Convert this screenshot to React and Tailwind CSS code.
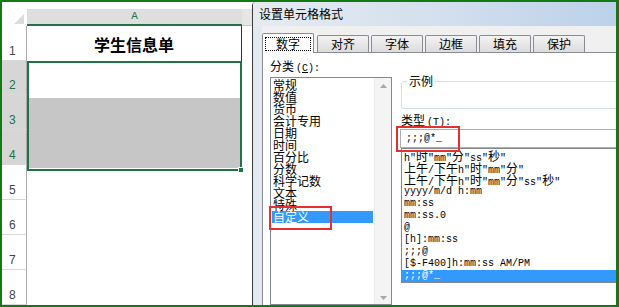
import React from "react"

const CATEGORIES = ["常规", "数值", "货币", "会计专用", "日期", "时间", "百分比", "分数", "科学记数", "文本", "特殊", "自定义"]

const FORMATS = [
  'h"时"mm"分"ss"秒"',
  '上午/下午h"时"mm"分"',
  '上午/下午h"时"mm"分"ss"秒"',
  "yyyy/m/d h:mm",
  "mm:ss",
  "mm:ss.0",
  "@",
  "[h]:mm:ss",
  ";;;@",
  "[$-F400]h:mm:ss AM/PM",
  ";;;@*_",
]

const TABS = ["数字", "对齐", "字体", "边框", "填充", "保护"]

// CJK runs at 12px, ASCII at 10px mono so each half-width char is 6px like SimSun
function Mixed({ text }) {
  const parts = text.match(/[\u3400-\u9fff]+|[^\u3400-\u9fff]+/g) || []
  return parts.map((p, i) =>
    /[\u3400-\u9fff]/.test(p) ? (
      <span key={i} className="text-[12px] leading-[12px] font-['Noto_Sans_CJK_SC',sans-serif]">{p}</span>
    ) : (
      <span key={i} className="text-[10px] leading-[12px] font-['Liberation_Mono',monospace] whitespace-pre">{p}</span>
    )
  )
}

function RowHead({ n, selected }) {
  return (
    <div
      className={`h-[36px] flex items-end pl-[7px] pb-[3px] border-b border-r border-b-[#d9d9d9] border-r-[#ababab] text-[12px] leading-[12px] font-['Liberation_Sans',sans-serif] ${
        selected ? "bg-[#d6d6d6] text-[#217346]" : "bg-white text-[#444]"
      }`}
    >
      {n}
    </div>
  )
}

function Sheet() {
  return (
    <div className="w-[250px] flex shrink-0">
      {/* row headers */}
      <div className="w-[25px] shrink-0 flex flex-col">
        <div className="h-[24px] bg-white pl-[12px] pt-[12px]">
          <svg width="10" height="10" viewBox="0 0 10 10">
            <polygon points="10,0 10,10 0,10" fill="#dcdcdc" />
          </svg>
        </div>
        <RowHead n={1} />
        <RowHead n={2} selected />
        <RowHead n={3} selected />
        <RowHead n={4} selected />
        <RowHead n={5} />
        <RowHead n={6} />
        <RowHead n={7} />
        <RowHead n={8} />
      </div>

      {/* column A */}
      <div className="w-[215px] shrink-0 flex flex-col">
        <div className="h-[24px] pt-[7px]">
          <div className="h-[17px] bg-[#dedede] border-b-2 border-[#217346] text-[#217346] text-[11px] leading-[15px] text-center font-['Liberation_Mono',monospace]">
            A
          </div>
        </div>
        <div className="h-[35px] border-r border-[#333] flex items-center justify-center">
          <span className="text-[16px] font-bold leading-none font-['Noto_Sans_CJK_SC',sans-serif]">学生信息单</span>
        </div>
        <div className="h-[110px] border-2 border-[#217346] relative flex flex-col">
          <div className="h-[35px] bg-white" />
          <div className="h-[70px] bg-[#c6c6c6]" />
          <div className="absolute -right-[4px] -bottom-[4px] w-[6px] h-[6px] bg-[#217346] border border-white" />
        </div>
      </div>

      {/* column B sliver */}
      <div className="flex-1 flex flex-col">
        <div className="h-[24px] pt-[7px]">
          <div className="h-[17px] bg-[#e6e6e6] border-b border-[#c8c8c8]" />
        </div>
      </div>
    </div>
  )
}

function Tab({ label, selected }) {
  if (selected) {
    return (
      <div className="relative z-10 -mb-px h-[20px] w-[52px] shrink-0 bg-white border border-b-0 border-[#898c95] rounded-t-[2px] flex items-center justify-center text-[12px] leading-[12px]">
        <div className="absolute left-[2px] right-[2px] top-[3px] h-[14px] border border-dotted border-black" />
        {label}
      </div>
    )
  }
  return (
    <div className="ml-[2px] first:ml-0 h-[17px] w-[52px] shrink-0 bg-linear-to-b from-[#f3f3f3] to-[#dcdcdc] border border-b-0 border-[#898c95] rounded-t-[2px] flex items-center justify-center text-[12px] leading-[12px]">
      {label}
    </div>
  )
}

function Dialog() {
  return (
    <div className="flex-1 min-w-0 flex flex-col border-l border-[#3a3a3a] rounded-tl-[4px] overflow-hidden">
      <div className="h-[24px] shrink-0 bg-linear-to-r from-[#e6ebf1] via-[#d4e0ee] to-[#bcd1ea] flex items-center pl-[6px] text-[12px] text-black">
        设置单元格格式
      </div>
      <div className="flex-1 min-h-0 flex">
        <div className="w-[9px] shrink-0 bg-[#e3e9f1]" />
        <div className="flex-1 min-w-0 flex flex-col bg-[#f0f0f0]">
          <div className="h-[26px] shrink-0 flex items-end">
            <Tab label="数字" selected />
            <div className="ml-[3px] flex items-end">
              {TABS.slice(1).map((t) => (
                <Tab key={t} label={t} />
              ))}
            </div>
          </div>

          {/* tab page */}
          <div className="flex-1 min-h-0 bg-white border-t border-l border-[#898c95] relative overflow-hidden flex">
            <div className="w-[129px] shrink-0 pl-[7px] pt-[7px] flex flex-col">
              <div className="h-[12px] leading-[12px] text-[12px] whitespace-nowrap">
                分类<span className="text-[10px] font-['Liberation_Mono',monospace] ml-[2px]">(<span className="underline">C</span>):</span>
              </div>
              <div className="mt-[5px] w-[122px] flex-1 border border-[#828790] flex">
                <div className="flex-1 flex flex-col pt-px">
                  {CATEGORIES.map((c) => (
                    <div
                      key={c}
                      className={`h-[12px] leading-[12px] text-[12px] ${
                        c === "自定义" ? "mx-px pl-px bg-[#3399ff] text-white" : "pl-[2px] text-black"
                      }`}
                    >
                      {c}
                    </div>
                  ))}
                </div>
                <div className="w-[17px] bg-[#f4f4f4] border-l border-[#ececec] flex flex-col items-center justify-between pt-[6px] pb-[4px]">
                  <svg width="7" height="4" viewBox="0 0 7 4">
                    <polygon points="3.5,0 7,4 0,4" fill="#a8a8a8" />
                  </svg>
                  <svg width="7" height="4" viewBox="0 0 7 4">
                    <polygon points="0,0 7,0 3.5,4" fill="#a8a8a8" />
                  </svg>
                </div>
              </div>
            </div>

            <div className="pl-[8px] flex flex-col w-[270px] shrink-0">
              <div className="mt-[28px] ml-px h-[28px] border border-[#d5dfe5] rounded-[3px] relative">
                <span className="absolute -top-[8px] left-[5px] bg-white px-[2px] text-[12px] leading-[14px]">示例</span>
              </div>
              <div className="mt-[5px] ml-px h-[12px] leading-[12px] text-[12px] whitespace-nowrap">
                类型<span className="text-[10px] font-['Liberation_Mono',monospace] ml-[2px]">(<span className="underline">T</span>):</span>
              </div>
              <div className="mt-[3px] h-[19px] border border-[#abadb3] border-r-0 pl-[5px] flex items-center">
                <div className="flex items-baseline h-[12px]">
                  <Mixed text=";;;@*_" />
                </div>
              </div>
              <div className="ml-px h-[135px] border border-[#828790] border-r-0 pt-px pb-px flex flex-col">
                {FORMATS.map((f, i) => (
                  <div
                    key={f}
                    className={`h-[12px] shrink-0 flex items-baseline pl-[2px] whitespace-nowrap ${
                      i === FORMATS.length - 1 ? "bg-[#3399ff] text-white" : "text-black"
                    }`}
                  >
                    <Mixed text={f} />
                  </div>
                ))}
              </div>
            </div>

            {/* red highlight boxes */}
            <div className="absolute left-[6px] top-[153px] w-[63px] h-[24px] border-2 border-[#e53030]" />
            <div className="absolute left-[133px] top-[73px] w-[64px] h-[26px] border-2 border-[#e53030]" />
          </div>
        </div>
      </div>
    </div>
  )
}

export default function App() {
  return (
    <div className="w-[619px] h-[307px] overflow-hidden bg-white border-t-2 border-l-2 border-b-2 border-r-[3px] border-[#137a13] flex font-['Noto_Sans_CJK_SC',sans-serif]">
      <Sheet />
      <Dialog />
    </div>
  )
}
